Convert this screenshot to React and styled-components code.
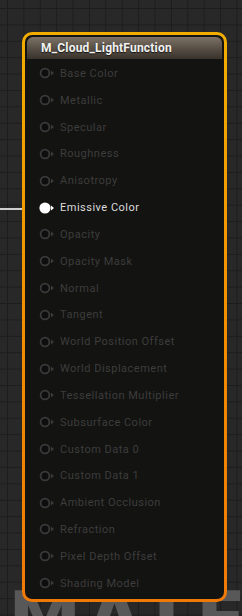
import React from "react";
import styled, { createGlobalStyle } from "styled-components";

const Global = createGlobalStyle`
  html, body {
    margin: 0;
    padding: 0;
    background: #262626;
  }
`;

const Canvas = styled.div`
  position: relative;
  width: 242px;
  height: 616px;
  overflow: hidden;
  background-color: #282828;
  background-image:
    linear-gradient(to right, #1d1d1d 1px, transparent 1px),
    linear-gradient(to bottom, #1d1d1d 1px, transparent 1px);
  background-size: 16.4px 16.4px;
  background-position: 7px 8px;
  font-family: Roboto, "Noto Sans", sans-serif;
  padding: 32px 0 0 22px;
  box-sizing: border-box;
`;

const Watermark = styled.div`
  position: absolute;
  left: 8px;
  top: 582px;
  font-family: "DejaVu Sans", sans-serif;
  font-weight: bold;
  font-size: 74px;
  letter-spacing: 4px;
  color: #585858;
  line-height: 1;
  white-space: nowrap;
`;

const Wire = styled.div`
  position: absolute;
  left: 0;
  top: 208px;
  width: 44px;
  height: 2px;
  background: #cfcfcf;
`;

const Node = styled.div`
  position: relative;
  width: 205px;
  height: 570px;
  box-sizing: border-box;
  border: 3px solid transparent;
  border-radius: 10px;
  background:
    linear-gradient(#131312, #131312) padding-box,
    linear-gradient(to bottom, #f2ad00, #f28a00 60%, #f07a08) border-box;
  padding: 2px;
  display: flex;
  flex-direction: column;
`;

const Header = styled.div`
  height: 22px;
  border-radius: 6px 6px 0 0;
  background: linear-gradient(to bottom, #7d7266, #5c5349 45%, #39332d);
  color: #f2f2f2;
  font-weight: bold;
  font-size: 12px;
  letter-spacing: 0.2px;
  display: flex;
  align-items: center;
  padding-left: 14px;
  text-shadow: 0 1px 1px rgba(0, 0, 0, 0.7);
`;

const Pins = styled.div`
  display: flex;
  flex-direction: column;
  padding-top: 1px;
`;

const Row = styled.div`
  height: 26.84px;
  display: flex;
  align-items: center;
  padding-left: 12px;
  gap: 5px;
  font-size: 11px;
  letter-spacing: 0.5px;
  color: ${(p) => (p.active ? "#dcdcdc" : "#3d3d3b")};
`;

const PinIcon = ({ active }) => (
  <svg width="16" height="12" viewBox="0 0 16 12">
    {active ? (
      <circle cx="6" cy="6" r="5.6" fill="#ffffff" />
    ) : (
      <circle cx="6" cy="6" r="4.4" fill="#0e0e0e" stroke="#3a3a3a" strokeWidth="1.8" />
    )}
    <path d="M12 3.6 L15 6 L12 8.4 Z" fill={active ? "#ffffff" : "#3a3a3a"} />
  </svg>
);

const inputs = [
  "Base Color",
  "Metallic",
  "Specular",
  "Roughness",
  "Anisotropy",
  "Emissive Color",
  "Opacity",
  "Opacity Mask",
  "Normal",
  "Tangent",
  "World Position Offset",
  "World Displacement",
  "Tessellation Multiplier",
  "Subsurface Color",
  "Custom Data 0",
  "Custom Data 1",
  "Ambient Occlusion",
  "Refraction",
  "Pixel Depth Offset",
  "Shading Model",
];

export default function App() {
  return (
    <Canvas>
      <Global />
      <Watermark>MATERIAL</Watermark>
      <Wire />
      <Node>
        <Header>M_Cloud_LightFunction</Header>
        <Pins>
          {inputs.map((name) => {
            const active = name === "Emissive Color";
            return (
              <Row key={name} active={active}>
                <PinIcon active={active} />
                {name}
              </Row>
            );
          })}
        </Pins>
      </Node>
    </Canvas>
  );
}
